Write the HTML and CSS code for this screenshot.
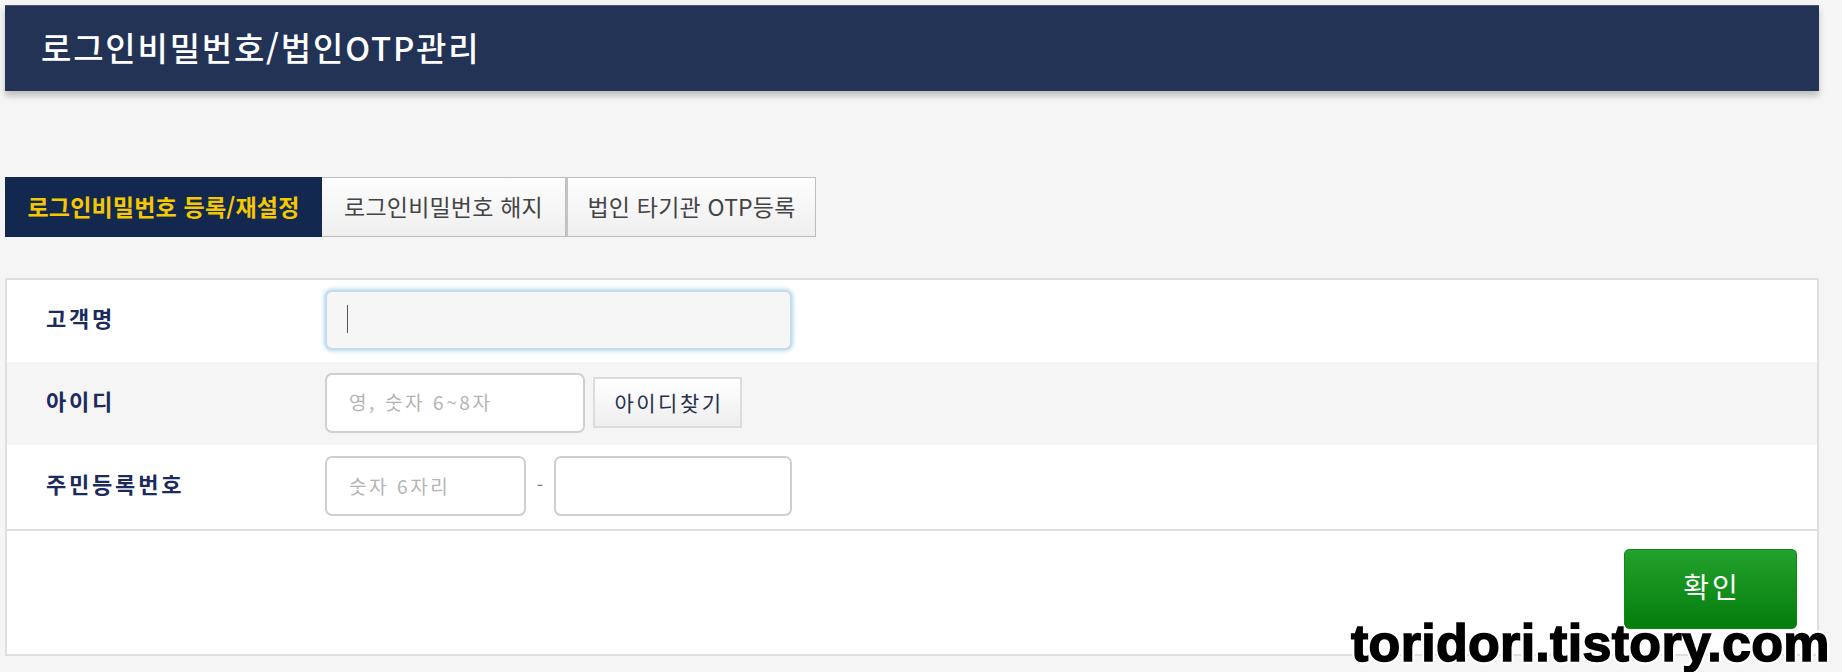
FILE: index.html
```html
<!DOCTYPE html>
<html lang="ko">
<head>
<meta charset="utf-8">
<title>로그인비밀번호/법인OTP관리</title>
<link rel="stylesheet" href="styles.css">
</head>
<body>
<div class="page">
  <header class="header">
    <h1 class="title">로그인비밀번호/법인OTP관리</h1>
  </header>

  <nav class="tabs">
    <a class="tab tab-active">로그인비밀번호 등록/재설정</a>
    <a class="tab tab-2">로그인비밀번호 해지</a>
    <a class="tab tab-3">법인 타기관 OTP등록</a>
  </nav>

  <section class="panel">
    <div class="row row-1">
      <div class="label">고객명</div>
      <div class="field">
        <div class="input input-focus input-name"><span class="caret"></span></div>
      </div>
    </div>
    <div class="row row-2">
      <div class="label">아이디</div>
      <div class="field">
        <input class="input input-id" type="text" placeholder="영, 숫자 6~8자">
        <button class="btn-find" type="button">아이디찾기</button>
      </div>
    </div>
    <div class="row row-3">
      <div class="label">주민등록번호</div>
      <div class="field">
        <input class="input input-jumin1" type="text" placeholder="숫자 6자리">
        <span class="dash">-</span>
        <input class="input input-jumin2" type="password">
      </div>
    </div>
    <div class="actions">
      <button class="btn-ok" type="button">확인</button>
    </div>
  </section>

  <div class="watermark">toridori.tistory.com</div>
</div>
</body>
</html>
```

FILE: styles.css
```css
* { box-sizing: border-box; }

html, body {
  margin: 0;
  padding: 0;
  background: #f5f5f5;
}

body {
  font-family: "Noto Sans CJK KR", "Noto Sans", sans-serif;
  width: 1842px;
  height: 672px;
  overflow: hidden;
}

.page {
  position: relative;
  padding: 5px 23px 0 5px;
  height: 672px;
}

.header {
  height: 86px;
  background: #223356;
  border-top: 1px solid #4a5775;
  box-shadow: 0 5px 6px rgba(0, 0, 0, 0.22);
  display: flex;
  align-items: center;
  padding-left: 36px;
}

.title {
  margin: 0;
  font-size: 33px;
  font-weight: 500;
  color: #ffffff;
  letter-spacing: 1.8px;
  line-height: 1;
  padding-bottom: 2px;
}

.tabs {
  display: flex;
  margin-top: 86px;
  height: 60px;
}

.tab {
  display: flex;
  align-items: center;
  justify-content: center;
  font-size: 23px;
  font-weight: 700;
  color: #444444;
  background: linear-gradient(#fdfdfd, #efefef);
  border: 1px solid #bdbdbd;
  letter-spacing: 0.2px;
  padding-bottom: 2px;
}

.tab-active {
  width: 317px;
  background: #13284f;
  border-color: #13284f;
  color: #f5c800;
}

.tab-2 {
  width: 244px;
  font-weight: 400;
  border-left: none;
}

.tab-3 {
  width: 250px;
  font-weight: 400;
  border-left: 2px solid #c4c4c4;
}

.panel {
  margin-top: 41px;
  background: #ffffff;
  border: 2px solid #dedede;
}

.row {
  display: flex;
  align-items: center;
  padding-bottom: 2px;
}

.row-1 { height: 82px; }

.row-2 {
  height: 83px;
  background: #f5f5f5;
}

.row-3 {
  height: 86px;
  border-bottom: 2px solid #e0e0e0;
}

.label {
  width: 318px;
  padding-left: 39px;
  padding-bottom: 6px;
  font-size: 22px;
  font-weight: 700;
  color: #1c2a5c;
  letter-spacing: 2.8px;
}

.field {
  display: flex;
  align-items: center;
}

.input {
  height: 60px;
  border: 2px solid #cfcfcf;
  border-radius: 7px;
  background: #ffffff;
  font-family: "Noto Sans CJK KR", "Noto Sans", sans-serif;
  font-size: 19px;
  letter-spacing: 2.6px;
  padding: 0 0 2px 22px;
  color: #333333;
  outline: none;
}

.input::placeholder {
  color: #b4b4b4;
}

.input-focus {
  display: flex;
  align-items: center;
  background: #f6f6f6;
  border-color: #c9dbe6;
  box-shadow: 0 0 4px 1px #aed8f0;
}

.caret {
  display: block;
  width: 1px;
  height: 28px;
  background: #555555;
  margin-left: -2px;
}

.input-name { width: 467px; }
.input-id { width: 260px; }
.input-jumin1 { width: 201px; }
.input-jumin2 { width: 238px; }

.btn-find {
  margin-left: 8px;
  width: 149px;
  height: 51px;
  border: 2px solid #dcdcdc;
  background: linear-gradient(#ffffff, #eeeeee);
  font-family: "Noto Sans CJK KR", "Noto Sans", sans-serif;
  font-size: 21px;
  color: #27314c;
  letter-spacing: 2.5px;
  padding: 0 0 2px 3px;
}

.dash {
  width: 28px;
  text-align: center;
  color: #777777;
  font-size: 18px;
  padding-bottom: 4px;
}

.actions {
  height: 123px;
  display: flex;
  justify-content: flex-end;
  align-items: flex-start;
  padding: 18px 20px 0 0;
}

.btn-ok {
  width: 173px;
  height: 80px;
  border: 1px solid #0f8a18;
  border-radius: 5px;
  background: linear-gradient(#23a22d, #057c0c);
  color: #ffffff;
  font-family: "Noto Sans CJK KR", "Noto Sans", sans-serif;
  font-size: 28px;
  letter-spacing: 3px;
  padding: 0 0 6px 3px;
}

.watermark {
  position: absolute;
  left: 1351px;
  top: 617px;
  font-family: "Liberation Sans", Arial, sans-serif;
  font-weight: 700;
  font-size: 52px;
  line-height: 1;
  color: #000000;
  letter-spacing: 0.3px;
  -webkit-text-stroke: 1.5px #000000;
  text-shadow:
    2px 0 0 #fff, -2px 0 0 #fff, 0 2px 0 #fff, 0 -2px 0 #fff,
    2px 2px 0 #fff, -2px -2px 0 #fff, 2px -2px 0 #fff, -2px 2px 0 #fff,
    3px 0 0 #fff, -3px 0 0 #fff, 0 3px 0 #fff, 0 -3px 0 #fff;
}
```
